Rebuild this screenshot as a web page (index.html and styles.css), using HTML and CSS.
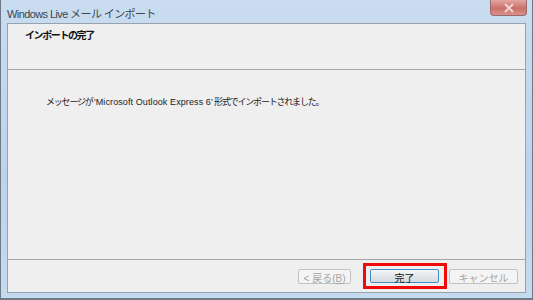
FILE: index.html
```html
<!DOCTYPE html>
<html lang="ja">
<head>
    <meta charset="UTF-8">
    <title>Windows Live メール インポート</title>
    <link rel="stylesheet" href="styles.css">
</head>
<body>
    <div class="window">
        <div class="titlebar">
            <span class="title">Windows Live メール インポート</span>
            <div class="close-btn">
                <svg width="12" height="10" viewBox="0 0 12 10">
                    <path d="M2 1 L10 9 M10 1 L2 9" stroke="#f1d2d0" stroke-width="2" fill="none"/>
                </svg>
            </div>
        </div>

        <div class="content">
            <div class="header">
                <h2>インポートの完了</h2>
            </div>

            <div class="body">
                <p>メッセージが <span class="latin">'Microsoft Outlook Express 6'</span> 形式でインポートされました。</p>
            </div>

            <div class="footer">
                <button class="btn" disabled>&lt; 戻る(<u>B</u>)</button>
                <div class="highlight">
                    <button class="btn primary">完了</button>
                </div>
                <button class="btn" disabled>キャンセル</button>
            </div>
        </div>
    </div>
</body>
</html>
```

FILE: styles.css
```css
body {
    margin: 0;
    width: 533px;
    height: 300px;
    overflow: hidden;
    font-family: 'Liberation Sans', 'Noto Sans CJK JP', sans-serif;
    background-color: #fff;
}

.window {
    box-sizing: border-box;
    width: 533px;
    height: 300px;
    display: flex;
    flex-direction: column;
    padding: 0 6px 5px 6px;
    background: linear-gradient(to bottom, #c9dcf0, #bcd3ec 60%, #c6daef);
    border-left: 1px solid #6f7a86;
    border-right: 1px solid #6f7a86;
    border-bottom: 2px solid #6f7a86;
}

.titlebar {
    height: 23px;
    display: flex;
    align-items: flex-start;
}

.title {
    margin-top: 5px;
    font-size: 11px;
    letter-spacing: -0.6px;
    color: #3c4650;
}

.close-btn {
    margin-left: auto;
    margin-right: -1px;
    width: 37px;
    height: 16px;
    display: flex;
    align-items: center;
    justify-content: center;
    background: linear-gradient(to bottom, #e4a6a2, #c9706a 55%, #d9918a);
    border: 1px solid #9c6a6c;
    border-top: none;
    border-radius: 0 0 4px 4px;
    box-sizing: border-box;
}

.content {
    flex: 1;
    display: flex;
    flex-direction: column;
    background-color: #efefef;
    border: 1px solid #97a2ae;
}

.header {
    height: 46px;
    border-bottom: 1px solid #a9a3a5;
    padding-left: 17px;
    box-sizing: border-box;
}

.header h2 {
    margin: 3px 0 0;
    font-size: 10px;
    letter-spacing: -1.4px;
    font-weight: bold;
    color: #111;
}

.body {
    flex: 1;
    padding-left: 38px;
}

.body p {
    margin: 25px 0 0;
    font-size: 9px;
    letter-spacing: -1.2px;
    color: #222;
}

.body .latin {
    letter-spacing: 0.1px;
}

.footer {
    height: 33px;
    border-top: 1px solid #a9a3a5;
    display: flex;
    align-items: center;
    padding-left: 290px;
    box-sizing: border-box;
}

.btn {
    width: 53px;
    height: 15px;
    padding: 0;
    font-family: inherit;
    font-size: 10px;
    color: #a4a4a4;
    background-color: #f4f4f4;
    border: 1px solid #c2c2c2;
    border-radius: 2px;
}

.btn:last-child {
    width: 69px;
    margin-left: 2px;
}

.highlight {
    margin-left: 12px;
    padding: 3px 5px 3px 2px;
    border: 3px solid #f00a0a;
    display: flex;
}

.primary {
    width: 69px;
    height: 14px;
    color: #111;
    background: linear-gradient(to bottom, #f4f6f8, #e4e7ea 50%, #d6dadf);
    border: 1px solid #3e8fc8;
}
```
